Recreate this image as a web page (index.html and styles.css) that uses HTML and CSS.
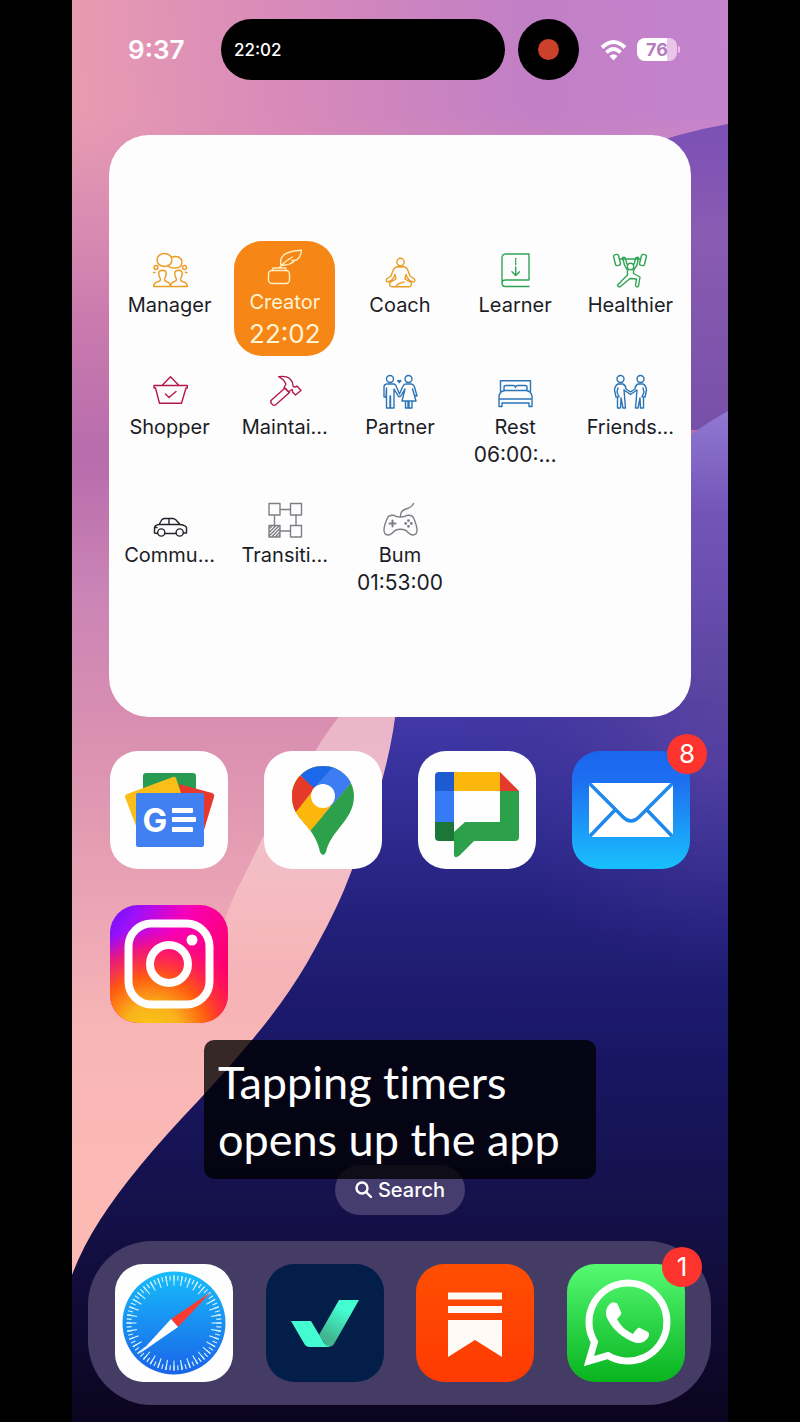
FILE: index.html
```html
<!DOCTYPE html>
<html lang="en">
<head>
<meta charset="utf-8">
<meta name="viewport" content="width=device-width, initial-scale=1">
<title>Home screen</title>
<link rel="stylesheet" href="styles.css">
</head>
<body>
<div class="phone">
  <svg class="wallpaper" viewBox="0 0 656 1422" preserveAspectRatio="none" aria-hidden="true">
    <defs>
      <linearGradient id="wSky" x1="0" y1="0.1" x2="1" y2="0"><stop offset="0" stop-color="#e99bb1"/><stop offset=".35" stop-color="#d689ba"/><stop offset=".7" stop-color="#c17fc6"/><stop offset="1" stop-color="#c383cd"/></linearGradient>
      <linearGradient id="wLeft" x1="0" y1="0" x2="0" y2="1"><stop offset=".08" stop-color="#dd90b2" stop-opacity="0"/><stop offset=".14" stop-color="#d98cb2" stop-opacity=".8"/><stop offset=".22" stop-color="#cb7bae"/><stop offset=".32" stop-color="#b76cac"/><stop offset=".42" stop-color="#cb85b6"/><stop offset=".52" stop-color="#da90b0"/><stop offset=".64" stop-color="#eba5b5"/><stop offset=".72" stop-color="#f7b5b6"/><stop offset=".85" stop-color="#fdbab5"/></linearGradient>
      <linearGradient id="wViolet" x1="0" y1="0" x2="0" y2="1"><stop offset="0" stop-color="#7b50b6"/><stop offset=".35" stop-color="#8a5bb2"/><stop offset="1" stop-color="#7750a8"/></linearGradient>
      <linearGradient id="wLilac" x1="0" y1="0" x2="0" y2="1"><stop offset="0" stop-color="#9078d2"/><stop offset=".35" stop-color="#7355b8"/><stop offset="1" stop-color="#5943a0"/></linearGradient>
      <linearGradient id="wBand" x1="0" y1="0" x2="0" y2="1"><stop offset="0" stop-color="#e9b3c7"/><stop offset=".35" stop-color="#f0c0cc"/><stop offset=".7" stop-color="#f6b9bc"/><stop offset="1" stop-color="#f9b7b6" stop-opacity="0"/></linearGradient>
      <linearGradient id="wBlue" x1="0" y1="0" x2="0" y2="1"><stop offset="0" stop-color="#463aa9"/><stop offset=".12" stop-color="#34309a"/><stop offset=".3" stop-color="#23207b"/><stop offset=".5" stop-color="#181663"/><stop offset=".7" stop-color="#15114a"/><stop offset="1" stop-color="#0b051f"/></linearGradient>
      <radialGradient id="wGlow" cx="1" cy="0" r=".85"><stop offset="0" stop-color="#5943a0"/><stop offset=".25" stop-color="#5540a0" stop-opacity=".85"/><stop offset="1" stop-color="#3b2f93" stop-opacity="0"/></radialGradient>
    </defs>
    <rect width="656" height="1422" fill="url(#wSky)"/>
    <rect width="656" height="1422" fill="url(#wLeft)"/>
    <path d="M560 150Q610 132 656 124V430H560Z" fill="url(#wViolet)"/>
    <path d="M600 450Q625 428 656 411V700H600Z" fill="url(#wLilac)"/>
    <path d="M280 700Q265 718 250 740L191 837L170 880Q150 915 145 960Q140 990 160 1020L190 1030L340 870L350 700Z" fill="url(#wBand)"/>
    <path d="M325 700C320 760 298 826 272 890C262 914 248 940 235 963Q212 1002 180 1040Q154 1071 127 1100Q60 1170 28 1220Q10 1248 0 1275V1422H656V700Z" fill="url(#wBlue)"/>
    <rect x="330" y="700" width="326" height="330" fill="url(#wGlow)"/>
  </svg>

  <header class="status">
    <time class="clock">9:37</time>
    <div class="island"><span>22:02</span></div>
    <div class="record"><span class="record-dot"></span></div>
    <svg class="wifi" viewBox="0 0 27 22" aria-label="Wi-Fi"><path d="M2 8.500Q13.500-2.500 25 8.500" fill="none" stroke="#fff" stroke-width="4"/><path d="M6.500 13.500Q13.500 6.500 20.500 13.500" fill="none" stroke="#fff" stroke-width="3.600"/><path d="M9.500 17Q13.500 13.500 17.500 17L13.500 21.500Z" fill="#fff"/></svg>
    <div class="battery"><span class="battery-level">76</span><span class="battery-tip"></span></div>
  </header>

  <main class="home">
    <section class="widget" aria-label="Timers">
      <button class="timer amber"><svg viewBox="0 0 36 36"><ellipse cx="12.500" cy="8" rx="7.500" ry="6.500"/><path d="M20 5Q29 3 30 10Q30 16 23 16Q17 16 16 13.500"/><circle cx="4" cy="15.500" r="2"/><circle cx="32.500" cy="15.500" r="2"/><path d="M1.500 20.500h1.500M33.500 20.500h1.500"/><path d="M1.500 34.500Q2 30.500 6 29.800Q9.500 29 8 26Q4.500 18.500 10.500 18.300Q16.500 18.500 13 26Q11.500 29 15 29.800Q18 30.500 18.500 34.500ZM18.500 34.500Q19 30.500 22 29.800Q25.500 29 24 26Q20.500 18.500 26.500 18.300Q32.500 18.500 29 26Q27.500 29 31 29.800Q35 30.500 35.500 34.500Z"/></svg><span>Manager</span></button>
      <button class="timer active"><svg viewBox="0 0 36 36"><rect x="1.500" y="21.500" width="21" height="13" rx="3.500"/><path d="M5.500 21.500Q5 19 7 19H17.500Q19.500 19 18.500 21.500M12 19Q18 12 25.500 8M14 16Q12 8 20 4Q26 1.500 34.500 1.200Q34 8 29.500 11L25 11.500L27 12.500Q21 17 14.500 16"/></svg><span>Creator</span><span class="running">22:02</span></button>
      <button class="timer amber"><svg viewBox="0 0 36 36"><circle cx="18.500" cy="10" r="3.700"/><path d="M15.500 14.500Q12 15.500 11 18.500L9 24L4.500 27Q3.500 30 6 30Q10 29 12 25L13 22.500L14 27L8 30.500Q6.500 34.500 10 34.700H27Q30.500 34.500 29 30.500L23 27L24 22.500L25 25Q27 29 31 30Q33.500 30 32.500 27L28 24L26 18.500Q25 15.500 21.500 14.500Q18.500 15.500 15.500 14.500M14 34.500Q15 31.500 22 30"/></svg><span>Coach</span></button>
      <button class="timer green"><svg viewBox="0 0 36 36"><path d="M32 34.500H8.500Q5 34.500 5 31V6Q5 2 9 2H32V28H8.500Q5 28 5 31M18.700 15V23M15 19.800L18.700 23.500L22.500 19.800"/><path d="M18.700 6.500V14" stroke-dasharray="1 1.500"/></svg><span>Learner</span></button>
      <button class="timer green"><svg viewBox="0 0 36 36"><rect x="2.500" y="2.500" width="5" height="11" rx="1.500" transform="rotate(-14 5 8)"/><rect x="28.500" y="2.500" width="5" height="11" rx="1.500" transform="rotate(14 31 8)"/><path d="M8 7H28.500"/><circle cx="18.500" cy="14.500" r="3.200"/><path d="M10.500 5.500L12.500 13L15.500 18.500V23L5.500 33Q6 35.500 8.500 34.500L18 26.500L24.500 27L23.500 33.500Q25 36 26.500 34L28 25L21.500 21.500V18.500L25 13L26.500 5.500H24L22 12M10.500 5.500H13L15 12"/></svg><span>Healthier</span></button>

      <button class="timer berry"><svg viewBox="0 0 36 36"><path d="M10 11.500L18.500 2.800L27 11.500M2 11.500H35.300V14H34L29.500 29.300H7.500L3.500 14H2ZM13.500 20L17 23.500L24 17.500"/></svg><span>Shopper</span></button>
      <button class="timer berry"><svg viewBox="0 0 36 36"><path d="M18 14L4.500 26Q3 27.500 4.500 29.500L6 31Q7.500 32 9 30.500L22.500 18.500ZM11.500 2.700Q20 1.500 23.500 5.500Q26 8 26 12Q28 14 30 12L34 16.500L28.500 21L25.500 18Q26 16.500 25 15.500L21.500 18L17 13.500L19 10Q16.500 5 11.500 2.700Z"/></svg><span>Maintai…</span></button>
      <button class="timer blue"><svg viewBox="0 0 36 36"><circle cx="8" cy="5" r="3.500"/><circle cx="26.500" cy="5" r="3.500"/><path d="M4.500 10H12Q14 10.500 14.500 13L17.500 20L20.500 13Q21.500 10.500 23.500 10H29.500Q31.500 10.500 32.500 13L35 22L32.500 21.500L30.500 15L34 27H20L23 15L18.500 22.500H16.500L12 15V34H8.500V22H8V34H4.500V14L4 23H2V13Q2 10.500 4.500 10ZM23.500 27V34H26V27M27 27V34H30V27"/><path d="M17.300 9.500L15 7Q15.500 5 17.300 6.200Q19 5 19.600 7Z" fill="currentColor" stroke="none"/></svg><span>Partner</span></button>
      <button class="timer blue"><svg viewBox="0 0 36 36"><path d="M3.500 17.500V6.700H33.500V17.500M7 16.500V13Q7 11.500 9 11.500H16Q18.500 11.500 18.500 13.500Q18.500 11.500 21 11.500H28Q30 11.500 30 13V16.500M2 25V22Q3 17 8 16.500H29Q34 17 35 22V25ZM2 25V32.500H5V29H32V32.500H35V25"/></svg><span>Rest</span><span class="total">06:00:…</span></button>
      <button class="timer blue"><svg viewBox="0 0 36 36"><circle cx="8.500" cy="5" r="3.500"/><circle cx="28.500" cy="5" r="3.500"/><path d="M6 10H11Q13.500 11 14 15L18.500 18L23 15Q23.500 11 26 10H31Q34 11.500 34.500 16L33 23H31.500V34H28.500L28 24L26 34H23.500L25 16L18.500 20.500L12 16L13.500 34H11L9 24L8.500 34H5.500V23H4L2.500 16Q3 11.500 6 10ZM6 14L5 18L7 23M31 14L32 18L30 23"/></svg><span>Friends…</span></button>

      <button class="timer black"><svg viewBox="0 0 36 36"><circle cx="9.300" cy="30.500" r="3.600"/><circle cx="27.700" cy="30.500" r="3.600"/><path d="M5.500 31.500L2.500 31V25.500Q3 23 7 22.500L10 17.500Q11 16.500 13 16.500H20.500Q22.500 16.500 24 18L28 22.500Q34 23.500 34.500 25.500V31H31.500M13 31.500H24M7 22.500H28M17 16.500V22.500M5 25.500H3"/></svg><span>Commu…</span></button>
      <button class="timer gray"><svg viewBox="0 0 36 36"><path d="M2 1.500H13V13H2ZM23.500 1.500H34.500V13H23.500ZM2 23.500H13V35H2ZM23.500 23.500H34.500V35H23.500ZM13 7.500H23.500M13 29H23.500M7.500 13V23.500M29 13V23.500M2 27L5.500 23.500M2 30.500L9 23.500M2 34L12.500 23.500M4.500 35L13 26.500M8 35L13 30M11 35L13 33"/></svg><span>Transiti…</span></button>
      <button class="timer gray"><svg viewBox="0 0 36 36"><path d="M31.500 1.500Q29.500 5.500 24 7Q18.500 8.500 18.500 14M18.500 15Q14 15 12.500 13.500Q6.500 12.500 5 17Q2 24 2 28Q2 33 6 33Q9 33 13 28.500Q18.500 26 24 28.500Q28 33 31 33Q35 33 35 28Q35 24 32 17Q30.500 12.500 24.500 13.500Q23 15 18.500 15"/><path d="M10.500 18.500V24.500M7.500 21.500H13.500" stroke-width="2"/><g fill="currentColor" stroke="none"><circle cx="26.500" cy="18.700" r="1.400"/><circle cx="26.500" cy="24.300" r="1.400"/><circle cx="23.700" cy="21.500" r="1.400"/><circle cx="29.300" cy="21.500" r="1.400"/></g></svg><span>Bum</span><span class="total">01:53:00</span></button>
    </section>

    <nav class="apps" aria-label="Apps">
      <a class="app" href="#news" aria-label="News">
        <svg viewBox="0 0 118 118"><rect width="118" height="118" fill="#fefefe"/><rect x="33" y="22" width="53" height="40" rx="3" fill="#289b52"/><path d="M69 33L102 42Q105 43 104 46L94 79L75 70Z" fill="#e8372c"/><path d="M17 43L63 26Q65 25 66 27L72 45L26 75L15 46Q15 44 17 43Z" fill="#fbbd17"/><rect x="26" y="42" width="68" height="54" rx="2" fill="#4080f1"/><text x="45" y="81" text-anchor="middle" class="news-mark">G</text><path d="M62 57H82Q83 57 83 58V61Q83 62 82 62H62ZM62 66H85Q86 66 86 67V70Q86 71 85 71H62ZM62 76H82Q83 76 83 77V80Q83 81 82 81H62Z" fill="#fff"/></svg>
      </a>
      <a class="app" href="#maps" aria-label="Maps">
        <svg viewBox="0 0 118 118"><defs><clipPath id="pin"><path d="M59 15C76 15 90 28 90 45C90 69 67 79 62 101Q59 107 56 101C54 91 50 85 46 79C39 69 28 63 28 45C28 28 42 15 59 15Z"/></clipPath></defs><rect width="118" height="118" fill="#fefefe"/><g clip-path="url(#pin)"><rect x="20" y="10" width="80" height="100" fill="#2da04b"/><path d="M20 10H70L46 80L20 90Z" fill="#fcb70d"/><path d="M60 55L102 14L87 32L46 80L28 64L50 38Z" fill="#fcb70d"/><path d="M20 10L37 25L54 39L32 61L10 70Z" fill="#e33a2b"/><path d="M37 25L30 10H76L50 37Z" fill="#1b68ea"/><path d="M69 16L80 5L100 17L87 32L59 65L50 37Z" fill="#3c7df3"/><path d="M59 45L67 55L46 80L32 61L50 38Z" fill="#fcb70d"/></g><circle cx="59" cy="45" r="12" fill="#fff"/></svg>
      </a>
      <a class="app" href="#chat" aria-label="Chat">
        <svg viewBox="0 0 118 118"><rect width="118" height="118" fill="#fefefe"/><path d="M36 21V40H17V25Q17 21 21 21Z" fill="#1d5bd1"/><path d="M17 40H36V71H17Z" fill="#377af5"/><path d="M17 71H36V90H21Q17 90 17 86Z" fill="#1c7638"/><path d="M36 21H82V40H36Z" fill="#fcb70d"/><path d="M82 21L101 40H82Z" fill="#e33a2b"/><path d="M82 40H101V86Q101 90 97 90H56L41 105Q36 108 36 103V81L47 71H82Z" fill="#2da04b"/></svg>
      </a>
      <a class="app" href="#mail" aria-label="Mail, 8 unread">
        <svg viewBox="0 0 118 118"><defs><linearGradient id="mail" x2="0" y2="1"><stop offset="0" stop-color="#1a66ee"/><stop offset=".25" stop-color="#1d6ff0"/><stop offset="1" stop-color="#19c0fd"/></linearGradient></defs><rect width="118" height="118" fill="url(#mail)"/><rect x="17" y="32" width="84" height="54" rx="4" fill="#fff"/><path d="M18 33L51 66Q59 74 67 66L100 33M43 59L18 85M75 59L100 85" fill="none" stroke="#1f88ec" stroke-width="3.500"/></svg>
        <span class="badge">8</span>
      </a>
      <a class="app" href="#instagram" aria-label="Instagram">
        <svg viewBox="0 0 118 118"><defs><linearGradient id="igBase" x1="0" y1="0" x2="1" y2=".6"><stop offset="0" stop-color="#6a10ff"/><stop offset=".2" stop-color="#a010f8"/><stop offset=".5" stop-color="#f800b8"/><stop offset="1" stop-color="#ff0060"/></linearGradient><radialGradient id="igWarm" cx=".35" cy="1.100" r=".9"><stop offset="0" stop-color="#fbc917"/><stop offset=".28" stop-color="#f9b31b"/><stop offset=".55" stop-color="#ff5a10"/><stop offset=".8" stop-color="#ff1f50" stop-opacity=".7"/><stop offset="1" stop-color="#ff0090" stop-opacity="0"/></radialGradient></defs><rect width="118" height="118" fill="url(#igBase)"/><rect width="118" height="118" fill="url(#igWarm)"/><g fill="none" stroke="#fff" stroke-width="8"><rect x="18.500" y="18.500" width="81" height="81" rx="23"/><circle cx="59" cy="59" r="19"/></g><circle cx="82" cy="35" r="5.500" fill="#fff"/></svg>
      </a>
    </nav>

    <div class="prompt">
      <p class="caption">Tapping timers opens up the app</p>
      <button class="search"><svg viewBox="0 0 18 18" aria-hidden="true"><circle cx="7" cy="7" r="5.500"/><path d="M11 11L16 16"/></svg>Search</button>
    </div>
  </main>

  <nav class="dock" aria-label="Dock">
    <a class="app" href="#safari" aria-label="Safari">
      <svg viewBox="0 0 118 118"><defs><linearGradient id="sea" x2="0" y2="1"><stop offset="0" stop-color="#17bdfb"/><stop offset="1" stop-color="#1a63e8"/></linearGradient></defs><rect width="118" height="118" fill="#fefefe"/><circle cx="59" cy="59" r="51.500" fill="url(#sea)"/><g fill="none" stroke="#d3f1fc"><circle cx="59" cy="59" r="45" stroke-width="5" pathLength="72" stroke-dasharray=".3 .7" stroke-dashoffset=".15"/><circle cx="59" cy="59" r="42.500" stroke-width="10" pathLength="36" stroke-dasharray=".16 .84" stroke-dashoffset=".08"/></g><path d="M96 28L56 55L63 63Z" fill="#fb3a30"/><path d="M24 90L56 55L63 63Z" fill="#fff"/></svg>
    </a>
    <a class="app" href="#tasks" aria-label="Tasks">
      <svg viewBox="0 0 118 118"><defs><linearGradient id="tick" x1=".7" y1="0" x2=".25" y2="1"><stop offset=".2" stop-color="#43fcd0"/><stop offset=".85" stop-color="#41b68e"/></linearGradient></defs><rect width="118" height="118" fill="#031e49"/><path d="M73 36H93L68 80Q66 83 61 83L53 71Z" fill="url(#tick)"/><path d="M25 57H45L58 79Q60 82 64 83H43Q41 83 39 81Z" fill="#43fcd0"/></svg>
    </a>
    <a class="app" href="#reader" aria-label="Reader">
      <svg viewBox="0 0 118 118"><defs><linearGradient id="ember" x2="0" y2="1"><stop offset="0" stop-color="#ff4e02"/><stop offset="1" stop-color="#fd3a02"/></linearGradient></defs><rect width="118" height="118" fill="url(#ember)"/><path d="M32 28.500H86V35.500H32ZM32 42H86V49H32ZM32 56H86V93L59 76L32 93Z" fill="#fffaf5"/></svg>
    </a>
    <a class="app" href="#whatsapp" aria-label="WhatsApp, 1 unread">
      <svg viewBox="0 0 118 118"><defs><linearGradient id="leaf" x2="0" y2="1"><stop offset="0" stop-color="#56fa71"/><stop offset=".5" stop-color="#2dd649"/><stop offset="1" stop-color="#08b31e"/></linearGradient></defs><rect width="118" height="118" fill="url(#leaf)"/><path d="M22 97L27.500 78A39 39 0 1 1 41 91.500Z" fill="none" stroke="#fff" stroke-width="7"/><path d="M43 40C45 38 50 38 51 41L54 48C55 50 53 52 50 55C54 63 60 67 66 70C69 66 71 63 73 64L81 68C83 70 82 73 80 75C76 80 70 80 64 77C53 72 44 63 40 54C38 49 39 43 43 40Z" fill="#fff"/></svg>
      <span class="badge">1</span>
    </a>
  </nav>
</div>
</body>
</html>
```

FILE: styles.css
```css
* {
  box-sizing: border-box;
}

body {
  margin: 0;
  background: #000;
  color: #fff;
  font-family: Inter, "Liberation Sans", sans-serif;
}

button {
  border: 0;
  background: none;
  color: inherit;
  font: inherit;
  padding: 0;
}

.phone {
  position: relative;
  display: flex;
  flex-direction: column;
  width: 82%;
  min-height: 100vh;
  margin: 0 auto;
  overflow: hidden;
  isolation: isolate;
}

.wallpaper {
  position: absolute;
  inset: 0;
  z-index: -1;
  width: 100%;
  height: 100%;
}

/* Status bar */
.status {
  display: flex;
  align-items: center;
  padding: 19px 48px 0 56px;
}

.clock {
  width: 93px;
  font-size: 26px;
  font-weight: 600;
}

.island {
  flex: 1;
  display: flex;
  align-items: center;
  height: 61px;
  padding: 0 13px;
  border-radius: 31px;
  background: #000;
  font-size: 17px;
  font-weight: 500;
}

.record {
  display: grid;
  place-items: center;
  width: 61px;
  height: 61px;
  margin-left: 13px;
  border-radius: 50%;
  background: #000;
}

.record-dot {
  width: 21px;
  height: 21px;
  border-radius: 50%;
  background: #cc412b;
}

.wifi {
  width: 27px;
  height: 22px;
  margin-left: 21px;
}

.battery {
  display: flex;
  align-items: center;
  gap: 1px;
  margin-left: 10px;
}

.battery-level {
  width: 40px;
  border-radius: 8px;
  background: linear-gradient(90deg, #fff 76%, #ebc4ea 76%);
  color: #b57bc0;
  font-size: 18px;
  font-weight: 700;
  line-height: 23px;
  text-align: center;
}

.battery-tip {
  width: 2px;
  height: 7px;
  border-radius: 0 2px 2px 0;
  background: #ebc4ea;
}

/* Timers widget */
.home {
  flex: 1;
  padding: 55px 37px 0;
}

.widget {
  display: grid;
  grid-template-columns: repeat(5, 1fr);
  align-content: center;
  row-gap: 7px;
  aspect-ratio: 1;
  padding: 0 3px;
  border-radius: 40px;
  background: #fdfdfd;
}

.timer {
  display: flex;
  flex-direction: column;
  align-items: center;
  padding: 11px 0 15px;
  font-size: 20px;
  line-height: 28px;
  white-space: nowrap;
}

.timer svg {
  width: 36px;
  height: 36px;
  margin-bottom: 3px;
  fill: none;
  stroke: currentColor;
  stroke-width: 1.4;
  stroke-linejoin: round;
  stroke-linecap: round;
}

.timer span {
  color: #1c1c26;
}

.timer .total {
  font-size: 21px;
}

.timer.active {
  margin: 0 7px;
  padding: 8px 0 4px;
  border-radius: 28px;
  background: #f68717;
  color: #ffeec0;
}

.timer.active span {
  color: #fff3d2;
}

.timer.active .running {
  font-size: 26px;
  line-height: 36px;
}

.amber { color: #eb9c24; }
.green { color: #2fa454; }
.berry { color: #b3194f; }
.blue { color: #2b74b5; }
.black { color: #22222a; }
.gray { color: #7d7f86; }

/* App icons */
.apps {
  display: grid;
  grid-template-columns: repeat(4, 118px);
  justify-content: space-between;
  row-gap: 36px;
  padding: 34px 1px 0;
}

.app {
  position: relative;
  display: block;
  width: 118px;
  height: 118px;
  color: #fff;
  text-decoration: none;
}

.app svg {
  display: block;
  width: 100%;
  height: 100%;
  border-radius: 28px;
}

.news-mark {
  fill: #fff;
  font-size: 33px;
  font-weight: 700;
}

.badge {
  position: absolute;
  top: -17px;
  right: -17px;
  width: 40px;
  border-radius: 20px;
  background: #fd342d;
  font-size: 26px;
  line-height: 40px;
  text-align: center;
}

/* Caption and search */
.prompt {
  display: flex;
  flex-direction: column;
  align-items: center;
  padding-top: 17px;
}

.caption {
  z-index: 1;
  width: 392px;
  max-width: 100%;
  margin: 0 0 -14px;
  padding: 14px 14px 11px;
  border-radius: 10px;
  background: rgba(0, 0, 0, 0.78);
  font-family: Lato, "Open Sans", sans-serif;
  font-size: 45px;
  font-variant-ligatures: none;
  line-height: 57px;
}

.search {
  display: flex;
  align-items: center;
  gap: 5px;
  height: 50px;
  padding: 0 20px;
  border-radius: 25px;
  background: #453d6d;
  font-size: 20px;
  font-weight: 500;
}

.search svg {
  width: 18px;
  height: 18px;
  fill: none;
  stroke: #fff;
  stroke-width: 2.4;
  stroke-linecap: round;
}

/* Dock */
.dock {
  display: flex;
  justify-content: space-between;
  margin: 26px 17px 17px 16px;
  padding: 23px 26px 23px 27px;
  border-radius: 64px;
  background: #453c66;
}
```
